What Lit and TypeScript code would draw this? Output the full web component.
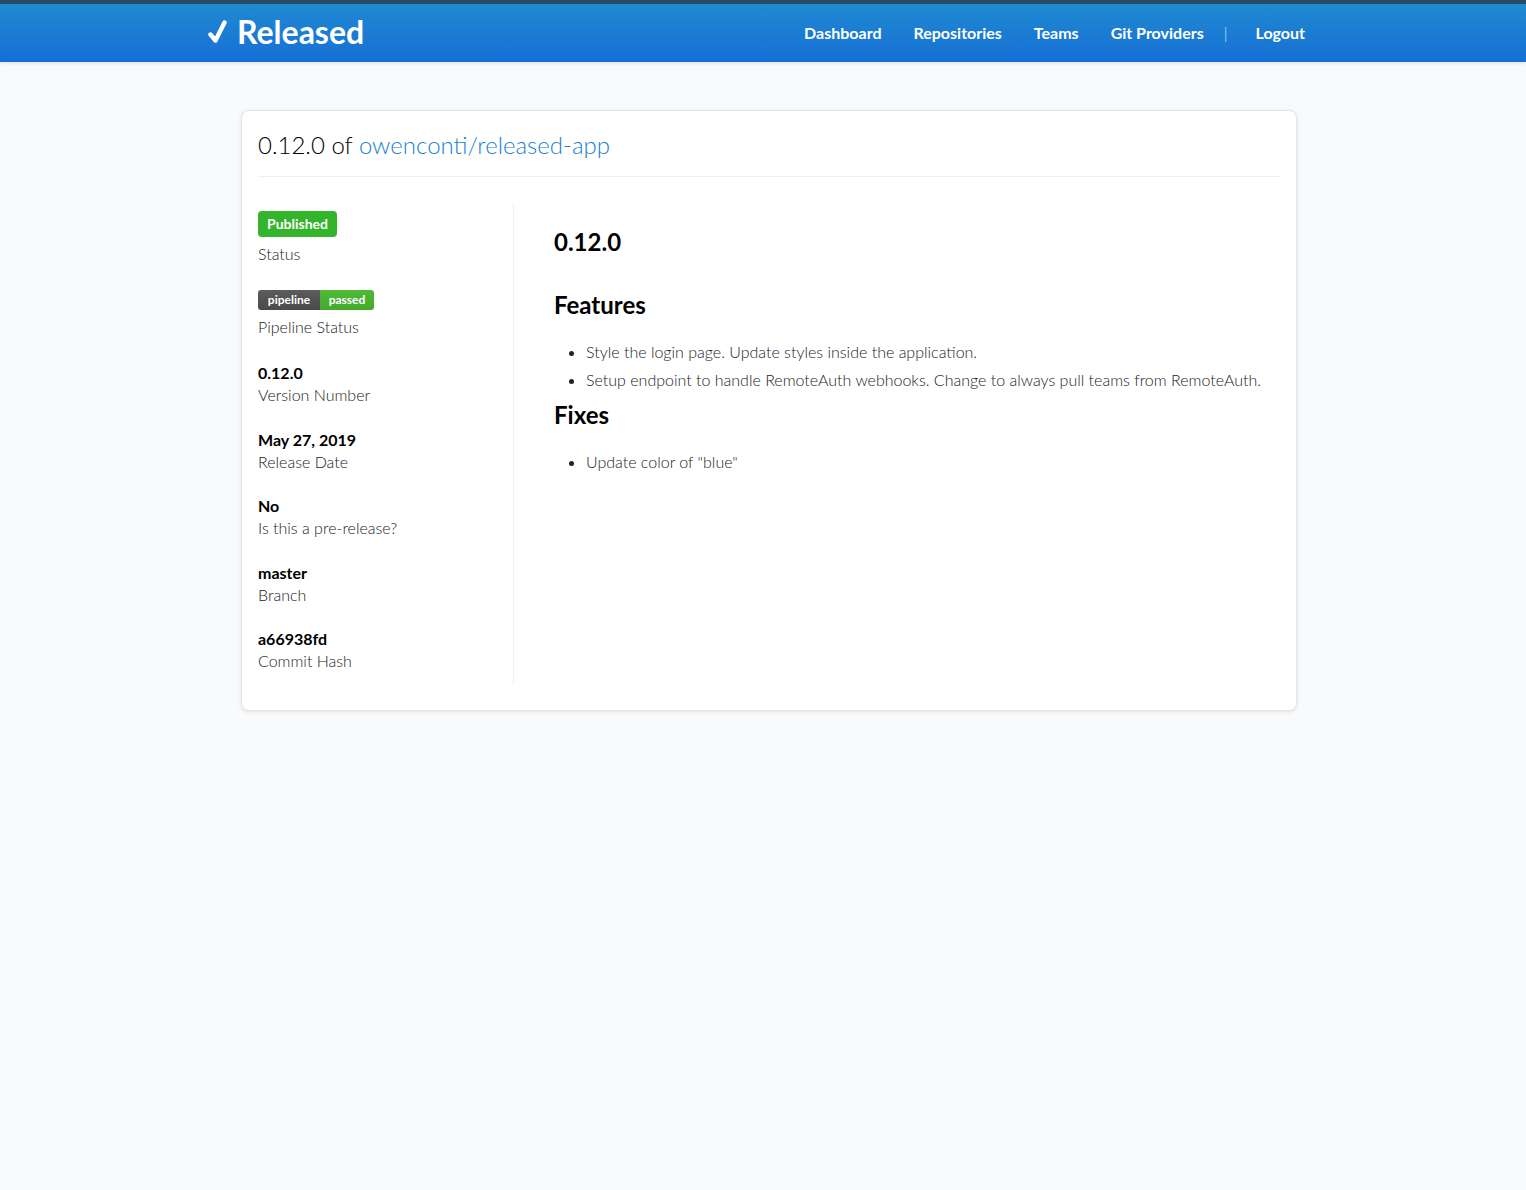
import { LitElement, html, css } from "lit";
import { customElement } from "lit/decorators.js";

const FONT = css`"Lato", "Open Sans", "Liberation Sans", sans-serif`;

@customElement("app-root")
export class AppRoot extends LitElement {
  static styles = css`
    :host { display: block; min-height: 1190px; background: #f8fafc; font-family: ${FONT}; color: #000; box-sizing: border-box; }
    * { box-sizing: border-box; }
    header { height: 62px; border-top: 4px solid #2a4a63; background: linear-gradient(180deg, #1f8ad0 0%, #176fd6 100%); box-shadow: 0 1px 4px rgba(0,0,0,.12); display: flex; align-items: center; justify-content: space-between; padding: 0 221px 2px 208px; color: #fff; }
    .logo { display: flex; align-items: center; gap: 9px; font-size: 32px; font-weight: 700; line-height: 1; }
    .logo svg { display: block; }
    nav { display: flex; align-items: center; font-size: 16px; font-weight: 700; }
    nav a { color: #fff; text-decoration: none; }
    nav a + a { margin-left: 32px; }
    .sep { margin: 0 28px 0 20px; font-weight: 300; opacity: .8; }
    .sep + a { margin-left: 0; }
    main { padding: 48px 229px 0 241px; }
    .card { background: #fff; border: 1px solid #e2e6ea; border-radius: 8px; box-shadow: 0 1px 4px rgba(0,0,0,.1); padding: 16px; height: 601px; }
    h1 { margin: 0; font-size: 24px; font-weight: 300; line-height: 36px; padding-bottom: 13px; border-bottom: 1px solid #eef0f2; }
    h1 a { color: #1a7fd4; text-decoration: none; }
    .cols { display: flex; margin-top: 26px; height: 482px; }
    .side { width: 256px; border-right: 1px solid #eef0f2; padding-top: 8px; }
    .item { display: flex; flex-direction: column; font-size: 16px; line-height: 22px; font-weight: 300; height: 66.6px; color: #222; }
    .item b { font-weight: 700; color: #000; }
    .pub { align-self: flex-start; background: #33b42b; color: #fff; font-size: 14px; font-weight: 700; line-height: 26px; height: 26px; padding: 0 9px; border-radius: 4px; margin-bottom: 6px; }
    .item.first { height: 79px; }
    .item.second { height: 72px; }
    .badge { display: flex; align-self: flex-start; height: 20px; border-radius: 3px; overflow: hidden; font-size: 12px; font-weight: 700; line-height: 20px; color: #fff; margin-bottom: 6px; }
    .badge span:first-child { width: 62px; text-align: center; background: linear-gradient(#5c5c5c, #4a4a4a); }
    .badge span:last-child { width: 54px; text-align: center; background: linear-gradient(#4fba36, #45a92e); }
    .content { padding: 0 0 0 40px; flex: 1; }
    h2 { margin: 22px 0 0; font-size: 24px; font-weight: 700; line-height: 34px; }
    h3 { margin: 0; font-size: 24px; font-weight: 700; line-height: 34px; }
    h3.f { margin-top: 29px; }
    ul { margin: 16px 0 0; padding: 0 0 0 32px; font-size: 16px; font-weight: 300; line-height: 28px; color: #222; }
    ul + h3 { margin-top: 4px; }
  `;

  private field(value: string, label: string) {
    return html`<div class="item"><b>${value}</b><span>${label}</span></div>`;
  }

  render() {
    return html`
      <header>
        <div class="logo">
          <svg width="20" height="24" viewBox="0 0 20 24" aria-hidden="true"><path d="M2.5 14.5 L7.5 20.5 L16.5 2.5" fill="none" stroke="#fff" stroke-width="4.4" stroke-linecap="round" stroke-linejoin="round"/></svg>
          <span>Released</span>
        </div>
        <nav>
          <a href="#">Dashboard</a><a href="#">Repositories</a><a href="#">Teams</a><a href="#">Git Providers</a>
          <span class="sep">|</span><a href="#">Logout</a>
        </nav>
      </header>
      <main>
        <div class="card">
          <h1>0.12.0 of <a href="#">owenconti/released-app</a></h1>
          <div class="cols">
            <aside class="side">
              <div class="item first"><span class="pub">Published</span><span>Status</span></div>
              <div class="item second"><div class="badge"><span>pipeline</span><span>passed</span></div><span>Pipeline Status</span></div>
              ${this.field("0.12.0", "Version Number")}
              ${this.field("May 27, 2019", "Release Date")}
              ${this.field("No", "Is this a pre-release?")}
              ${this.field("master", "Branch")}
              ${this.field("a66938fd", "Commit Hash")}
            </aside>
            <section class="content">
              <h2>0.12.0</h2>
              <h3 class="f">Features</h3>
              <ul>
                <li>Style the login page. Update styles inside the application.</li>
                <li>Setup endpoint to handle RemoteAuth webhooks. Change to always pull teams from RemoteAuth.</li>
              </ul>
              <h3>Fixes</h3>
              <ul><li>Update color of "blue"</li></ul>
            </section>
          </div>
        </div>
      </main>
    `;
  }
}
